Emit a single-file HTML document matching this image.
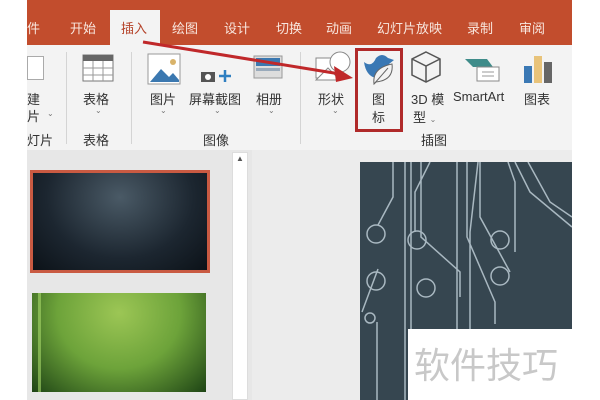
<!DOCTYPE html>
<html><head><meta charset="utf-8"><style>
*{margin:0;padding:0;box-sizing:border-box}
body{width:600px;height:400px;background:#fff;position:relative;overflow:hidden;font-family:"Liberation Sans","Noto Sans CJK SC",sans-serif;color:#333}
.a{position:absolute}
.tab{position:absolute;top:18px;font-size:13px;color:#f8e6de}
.lbl{position:absolute;font-size:13px;color:#333;text-align:center;white-space:nowrap}
.chev{position:absolute;font-size:8px;color:#777}
.div{position:absolute;top:52px;width:1px;height:92px;background:#d4d4d4}
</style></head><body>
<div class="a" style="left:27px;top:0;width:545px;height:45px;background:#c24d2d"></div>
<div class="a" style="left:110px;top:10px;width:50px;height:36px;background:#f3f3f3"></div>
<div class="tab" style="left:27px">件</div>
<div class="tab" style="left:70px">开始</div>
<div class="tab" style="left:121px;color:#b5432a">插入</div>
<div class="tab" style="left:172px">绘图</div>
<div class="tab" style="left:224px">设计</div>
<div class="tab" style="left:276px">切换</div>
<div class="tab" style="left:326px">动画</div>
<div class="tab" style="left:377px">幻灯片放映</div>
<div class="tab" style="left:467px">录制</div>
<div class="tab" style="left:519px">审阅</div>
<div class="a" style="left:27px;top:45px;width:545px;height:105px;background:#f3f3f3"></div>
<div class="div" style="left:66px"></div><div class="div" style="left:131px"></div><div class="div" style="left:300px"></div>
<div class="a" style="left:27px;top:56px;width:17px;height:24px;border:1px solid #aaa;background:#fff"></div>
<svg class="a" style="left:82px;top:54px" width="32" height="28"><rect x="1" y="1" width="30" height="26" fill="#fff" stroke="#777"/><rect x="1" y="1" width="30" height="6" fill="#666"/><path d="M1 14H31M1 21H31M11 7V27M21 7V27" stroke="#999"/></svg>
<svg class="a" style="left:147px;top:53px" width="34" height="32"><rect x="1" y="1" width="32" height="30" fill="#fff" stroke="#999"/><path d="M3 29L14 16L22 24L26 20L32 27V29Z" fill="#3b78b0"/><circle cx="26" cy="9" r="3" fill="#d9b36a"/></svg>
<svg class="a" style="left:200px;top:68px" width="34" height="16"><rect x="1" y="4" width="14" height="10" fill="#555"/><circle cx="8" cy="9" r="3" fill="#fff"/><path d="M25 2V14M19 8H31" stroke="#2f7fc1" stroke-width="2.5"/></svg>
<svg class="a" style="left:252px;top:54px" width="34" height="28"><rect x="2" y="2" width="28" height="22" fill="#ddd" stroke="#999"/><rect x="4" y="4" width="24" height="8" fill="#3b78b0"/><rect x="4" y="14" width="24" height="3" fill="#9ab"/></svg>
<svg class="a" style="left:314px;top:50px" width="40" height="34"><rect x="2" y="8" width="20" height="20" fill="#fff" stroke="#888"/><circle cx="26" cy="12" r="10" fill="#fff" stroke="#888"/><path d="M14 18L26 30H2Z" fill="#fff" stroke="#888"/></svg>
<svg class="a" style="left:362px;top:50px" width="34" height="38"><path d="M2 12Q10 18 14 8Q20 2 26 8L32 10L27 14Q28 26 14 28Q4 26 2 12Z" fill="#3a78b4"/><path d="M12 34Q10 18 30 14Q32 30 14 32Z" fill="#f3f3f3" stroke="#666"/><path d="M12 34L26 18" stroke="#666"/></svg>
<svg class="a" style="left:410px;top:50px" width="32" height="34"><path d="M16 2L30 9V25L16 32L2 25V9Z M2 9L16 16L30 9 M16 16V32" fill="none" stroke="#555" stroke-width="1.5"/></svg>
<svg class="a" style="left:463px;top:57px" width="38" height="26"><path d="M2 2H24L30 10H10Z" fill="#3f8c8a"/><rect x="14" y="10" width="22" height="14" fill="#fff" stroke="#888"/><path d="M19 15H31M19 19H31" stroke="#999"/></svg>
<svg class="a" style="left:523px;top:54px" width="30" height="30"><rect x="1" y="12" width="8" height="17" fill="#3a78b4"/><rect x="11" y="2" width="8" height="27" fill="#e8c37a"/><rect x="21" y="8" width="8" height="21" fill="#666"/></svg>
<div class="lbl" style="left:27px;top:89px">建</div><div class="lbl" style="left:27px;top:106px">片</div><div class="chev" style="left:47px;top:109px">⌄</div><div class="lbl" style="left:27px;top:130px">灯片</div>
<div class="lbl" style="left:83px;top:89px">表格</div><div class="chev" style="left:95px;top:106px">⌄</div><div class="lbl" style="left:83px;top:130px">表格</div>
<div class="lbl" style="left:150px;top:89px">图片</div><div class="chev" style="left:160px;top:106px">⌄</div>
<div class="lbl" style="left:189px;top:89px">屏幕截图</div><div class="chev" style="left:214px;top:106px">⌄</div>
<div class="lbl" style="left:256px;top:89px">相册</div><div class="chev" style="left:268px;top:106px">⌄</div>
<div class="lbl" style="left:203px;top:130px">图像</div>
<div class="lbl" style="left:318px;top:89px">形状</div><div class="chev" style="left:332px;top:106px">⌄</div>
<div class="lbl" style="left:372px;top:89px">图</div><div class="lbl" style="left:372px;top:107px">标</div>
<div class="lbl" style="left:411px;top:89px">3D 模</div><div class="lbl" style="left:413px;top:107px">型 <span style="font-size:8px;color:#777">⌄</span></div>
<div class="lbl" style="left:453px;top:89px">SmartArt</div>
<div class="lbl" style="left:524px;top:89px">图表</div>
<div class="lbl" style="left:421px;top:130px">插图</div>
<div class="a" style="left:355px;top:48px;width:48px;height:84px;border:3px solid #b02a2a"></div>
<svg class="a" style="left:0;top:0" width="600" height="400"><path d="M143 42L340 74" stroke="#c0282a" stroke-width="3"/><path d="M353 78L334 66L336 82Z" fill="#c0282a"/></svg>
<div class="a" style="left:27px;top:150px;width:545px;height:250px;background:#e7e7e7"></div>
<div class="a" style="left:232px;top:152px;width:16px;height:248px;background:#fff;border:1px solid #ddd"></div>
<div class="a" style="left:236px;top:154px;font-size:8px;color:#555">▲</div>
<div class="a" style="left:252px;top:150px;width:320px;height:250px;background:#ececec"></div>
<div class="a" style="left:30px;top:170px;width:180px;height:103px;border:3px solid #c95a42;background:radial-gradient(ellipse at 50% 25%,#4a5a66,#1c2630 60%,#0c1218)"></div>
<div class="a" style="left:32px;top:293px;width:174px;height:99px;background:radial-gradient(ellipse at 50% 20%,#9cc655,#6da33a 50%,#1e4415)"></div>
<div class="a" style="left:38px;top:293px;width:3px;height:99px;background:#a8d86a;opacity:.6"></div>
<div class="a" style="left:360px;top:162px;width:212px;height:238px;background:#364650"></div>
<svg class="a" style="left:360px;top:162px" width="212" height="238" fill="none" stroke="#a9b8c1" stroke-width="1.5"><path d="M33 0V35L18 63 M45 0V238 M51 0V238 M61 0V75L100 110V135 M70 0L55 30V70 M97 0V238 M107 0V75L135 140V162 M118 0L110 70V238 M120 0V55L150 110 M148 0L155 20V90 M155 0L170 30L212 65 M168 0L190 40L212 55 M18 107L2 150 M17 160V238"/><circle cx="16" cy="72" r="9"/><circle cx="57" cy="78" r="9"/><circle cx="140" cy="78" r="9"/><circle cx="140" cy="114" r="9"/><circle cx="16" cy="119" r="9"/><circle cx="10" cy="156" r="5"/><circle cx="66" cy="126" r="9"/></svg>
<div class="a" style="left:408px;top:329px;width:164px;height:71px;background:#fff"></div>
<div class="a" style="left:414px;top:345px;font-size:36px;color:#c8c8c8;font-family:'Noto Sans CJK SC',sans-serif;line-height:1">软件技巧</div>
</body></html>
